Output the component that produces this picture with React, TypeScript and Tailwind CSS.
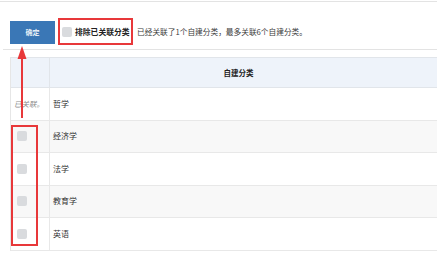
const rows = [
  { name: "哲学", linked: true },
  { name: "经济学" },
  { name: "法学" },
  { name: "教育学" },
  { name: "英语" },
];

export default function App() {
  return (
    <div
      className="relative w-[437px] h-[254px] overflow-hidden bg-white text-[#333]"
      style={{ fontFamily: "'Noto Sans CJK SC', 'Noto Sans', sans-serif" }}
    >
      <div className="mt-[1px] h-px bg-[#e3e3e3]" />

      {/* toolbar */}
      <div className="flex items-center pl-[10px] pt-[16px]">
        <button className="mt-[2px] h-[23px] w-[45px] bg-[#3a77b6] text-white text-[7px] font-medium leading-none">
          确定
        </button>
        <label className="ml-[3px] flex h-[27px] w-[75px] items-center border-2 border-[#e8383a] pl-[2px]">
          <span className="h-[10px] w-[10px] rounded-[2px] bg-[#d9dbde]" />
          <span className="ml-[3px] text-[7.8px] font-bold text-[#222] whitespace-nowrap">排除已关联分类</span>
        </label>
        <span className="ml-[4px] mt-[1px] text-[7.7px] text-[#3a3a3a] whitespace-nowrap">
          已经关联了1个自建分类，最多关联6个自建分类。
        </span>
      </div>

      <div className="ml-[3px] mt-[4px] h-px bg-[#e3e3e3]" />

      {/* table */}
      <div className="ml-[10px] mt-[7px] border-l border-[#e6e6e6]">
        <div className="grid h-[31px] grid-cols-[39px_1fr] border-y border-[#e1e5ea] bg-[#eef3fa]">
          <div className="border-r border-[#e1e5ea]" />
          <div className="flex items-center justify-center pr-[10px] text-[7.5px] font-bold text-[#222]">
            自建分类
          </div>
        </div>
        {rows.map((r, i) => (
          <div
            key={r.name}
            className={`grid h-[32.5px] grid-cols-[39px_1fr] border-b border-[#e8e8e8] ${
              i % 2 === 1 ? "bg-[#f8f8f8]" : "bg-white"
            }`}
          >
            <div className="flex items-center border-r border-[#e8e8e8] pl-[6px]">
              {r.linked ? (
                <span className="-ml-[3px] text-[7.5px] italic text-[#8a8a8a]">已关联。</span>
              ) : (
                <span className="h-[10px] w-[10px] rounded-[2px] bg-[#d9dbde]" />
              )}
            </div>
            <div className="flex items-center pl-[3px] text-[8px] text-[#333]">{r.name}</div>
          </div>
        ))}
      </div>

      {/* annotations */}
      <div className="absolute left-[11px] top-[125px] h-[121px] w-[27px] border-2 border-[#e8383a]" />
      <svg className="absolute left-[14px] top-[44px]" width="16" height="76" viewBox="0 0 16 76">
        <polygon points="8,2 3.5,15 12.5,15" fill="#e8383a" />
        <rect x="7" y="14" width="2" height="60" fill="#e8383a" />
      </svg>
    </div>
  );
}
